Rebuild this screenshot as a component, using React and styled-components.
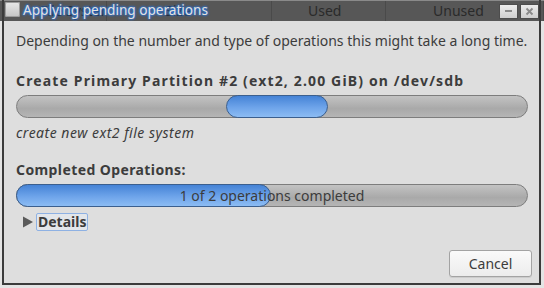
import React from "react";
import styled, { createGlobalStyle } from "styled-components";

const GlobalStyle = createGlobalStyle`
  html, body {
    margin: 0;
    padding: 0;
    background: #e9e9e9;
  }
  body {
    font-family: "Noto Sans", "Open Sans", sans-serif;
  }
`;

const headerCells = [
  { label: "File System", width: 107, pad: 40 },
  { label: "Size", width: 165, pad: 58 },
  { label: "Used", width: 114, pad: 36 },
  { label: "Unused", width: 158, pad: 47 },
];

const App = () => {
  return (
    <>
      <GlobalStyle />
      <Desktop>
        <BackHeader>
          {headerCells.map((c) => (
            <HeaderCell key={c.label} $width={c.width} $pad={c.pad}>
              {c.label}
            </HeaderCell>
          ))}
        </BackHeader>
        <BackSpacer />
        <BackRow>Create Primary Partition #2 (ext2, 2.00 GiB) on /dev/sdb</BackRow>

        <Window>
          <TitleBar>
            <WindowIcon />
            <Title>Applying pending operations</Title>
            <WinButtons>
              <WinButton title="Minimize">
                <svg width="9" height="9" viewBox="0 0 9 9">
                  <rect x="1" y="3" width="7" height="2" fill="#8a8a8a" />
                </svg>
              </WinButton>
              <WinButton title="Close">
                <svg width="9" height="9" viewBox="0 0 9 9">
                  <path d="M1.5 1.5 L7.5 7.5 M7.5 1.5 L1.5 7.5" stroke="#8a8a8a" strokeWidth="1.8" />
                </svg>
              </WinButton>
            </WinButtons>
          </TitleBar>

          <Body>
            <Message>
              Depending on the number and type of operations this might take a long time.
            </Message>

            <Heading $top={24} $spacing={1.15}>
              Create Primary Partition #2 (ext2, 2.00 GiB) on /dev/sdb
            </Heading>
            <Trough>
              <Pulse />
            </Trough>
            <Status>create new ext2 file system</Status>

            <Heading $top={21} $spacing={0.4}>Completed Operations:</Heading>
            <Trough>
              <Fill style={{ width: `${(1 / 2) * 100}%` }} />
              <BarLabel>1 of 2 operations completed</BarLabel>
            </Trough>

            <Expander>
              <svg width="12" height="12" viewBox="0 0 12 12">
                <polygon points="1,0.5 11,6 1,11.5" fill="#5a5a5a" />
              </svg>
              <ExpanderLabel>Details</ExpanderLabel>
            </Expander>

            <Footer>
              <Button>Cancel</Button>
            </Footer>
          </Body>
        </Window>
      </Desktop>
    </>
  );
};

const Desktop = styled.div`
  position: relative;
  width: 544px;
  height: 288px;
  overflow: hidden;
  display: flex;
  flex-direction: column;
  background: #e4e4e4;
`;

const BackHeader = styled.div`
  display: flex;
  height: 21px;
  background: #575757;
  border-top: 1px solid #8a8a8a;
  box-sizing: border-box;
`;

const HeaderCell = styled.div`
  width: ${(p) => p.$width}px;
  padding-left: ${(p) => p.$pad}px;
  box-sizing: border-box;
  border-right: 1px solid #4a4a4a;
  color: #2a2a2a;
  font-family: "Noto Sans", sans-serif;
  font-size: 14px;
  line-height: 20px;
  white-space: nowrap;
  overflow: hidden;
`;

const BackSpacer = styled.div`
  flex: 1;
`;

const BackRow = styled.div`
  height: 4px;
  padding-left: 5px;
  color: #1e1e1e;
  font-family: "Noto Sans", sans-serif;
  font-size: 11px;
  letter-spacing: -0.3px;
  line-height: 16px;
  white-space: nowrap;
`;

const Window = styled.div`
  position: absolute;
  left: 2px;
  top: 0;
  width: 539px;
  height: 285px;
  box-sizing: border-box;
  border: 2px solid #3b3b3b;
  border-top: none;
  display: flex;
  flex-direction: column;
`;

const TitleBar = styled.div`
  height: 21px;
  flex: none;
  display: flex;
  align-items: center;
  padding-left: 1px;
`;

const WindowIcon = styled.div`
  width: 15px;
  height: 15px;
  border-radius: 2px;
  background: linear-gradient(#e8e8e8, #c4c4c4);
  box-shadow: inset 0 0 0 1px #9c9c9c;
  margin-top: -2px;
`;

const Title = styled.div`
  margin-left: 3px;
  margin-top: -2px;
  color: #e6e2da;
  font-family: "Noto Sans", sans-serif;
  font-size: 13.6px;
  line-height: 18px;
  white-space: nowrap;
  text-shadow: 0 0 2px #1f6fe0, 0 0 2px #1f6fe0, 0 0 3px #3a86f0;
`;

const WinButtons = styled.div`
  margin-left: auto;
  display: flex;
  gap: 2px;
  margin-top: 2px;
`;

const WinButton = styled.div`
  width: 19px;
  height: 15px;
  box-sizing: border-box;
  border: 1px solid #4d4d4d;
  background: linear-gradient(#ececec, #cfcfcf);
  display: flex;
  align-items: center;
  justify-content: center;
`;

const Body = styled.div`
  flex: 1;
  background: #dedede;
  display: flex;
  flex-direction: column;
  padding: 12px 7px 6px 12px;
  color: #3c3c3c;
  font-family: "Noto Sans", "Open Sans", sans-serif;
  font-size: 14px;
  line-height: 16px;
`;

const Message = styled.div`
  white-space: nowrap;
`;

const Heading = styled.div`
  margin-top: ${(p) => p.$top}px;
  font-weight: bold;
  letter-spacing: ${(p) => p.$spacing}px;
  white-space: nowrap;
`;

const Trough = styled.div`
  position: relative;
  margin-top: 6px;
  margin-right: 4px;
  height: 23px;
  box-sizing: border-box;
  border: 1px solid #7d7d7d;
  border-radius: 12px;
  background: linear-gradient(#c3c3c3, #a9a9a9 60%, #b5b5b5);
`;

const Pulse = styled.div`
  position: absolute;
  left: 209px;
  top: -1px;
  width: 102px;
  height: 23px;
  box-sizing: border-box;
  border: 1px solid #3b5f8e;
  border-radius: 12px;
  background: linear-gradient(#4583d6, #6ea4ea 55%, #8cbcf3);
`;

const Fill = styled.div`
  position: absolute;
  left: -1px;
  top: -1px;
  height: 23px;
  box-sizing: border-box;
  border: 1px solid #3b5f8e;
  border-radius: 12px;
  background: linear-gradient(#4583d6, #6ea4ea 55%, #8cbcf3);
`;

const BarLabel = styled.div`
  position: relative;
  text-align: center;
  line-height: 21px;
  color: #3c3c3c;
`;

const Status = styled.div`
  margin-top: 7px;
  font-style: italic;
  letter-spacing: 0.5px;
  white-space: nowrap;
`;

const Expander = styled.div`
  margin-top: 6px;
  display: flex;
  align-items: center;
  gap: 2px;
  padding-left: 6px;
`;

const ExpanderLabel = styled.div`
  padding: 0 1px;
  height: 18px;
  box-sizing: border-box;
  border: 1px solid #8eb1e3;
  border-radius: 2px;
  background: #e3e6ea;
  font-weight: bold;
  line-height: 16px;
`;

const Footer = styled.div`
  margin-top: auto;
  display: flex;
  justify-content: flex-end;
`;

const Button = styled.button`
  width: 83px;
  height: 27px;
  box-sizing: border-box;
  border: 1px solid #a3a3a3;
  border-radius: 3px;
  background: linear-gradient(#fafafa, #ececec);
  box-shadow: 0 1px 0 rgba(0, 0, 0, 0.08);
  color: #3c3c3c;
  font-family: "Noto Sans", "Open Sans", sans-serif;
  font-size: 14px;
  padding: 0;
`;

export default App;
